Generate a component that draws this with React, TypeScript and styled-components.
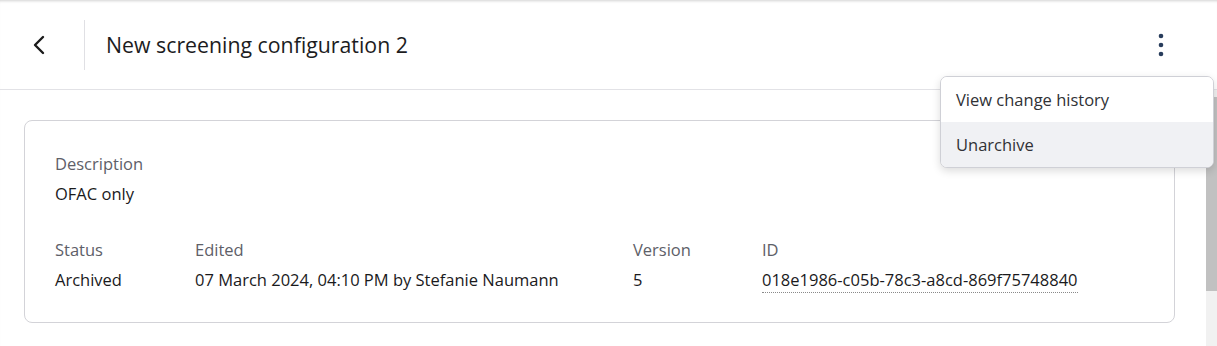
import styled, { createGlobalStyle } from "styled-components";
import { ChevronLeft } from "lucide-react";

const GlobalStyle = createGlobalStyle`
    html, body {
        margin: 0;
        padding: 0;
        background: #ffffff;
        font-family: "Open Sans", "Noto Sans", sans-serif;
        color: #1c1c1e;
        overflow: hidden;
    }
`;

type Field = { label: string; value: string; width: number; link?: boolean };

const fields: Field[] = [
    { label: "Status", value: "Archived", width: 140 },
    { label: "Edited", value: "07 March 2024, 04:10 PM by Stefanie Naumann", width: 438 },
    { label: "Version", value: "5", width: 129 },
    { label: "ID", value: "018e1986-c05b-78c3-a8cd-869f75748840", width: 340, link: true },
];

export default function App() {
    return (
        <Page>
            <GlobalStyle />
            <Header>
                <BackButton aria-label="Back">
                    <ChevronLeft size={32} strokeWidth={1.8} />
                </BackButton>
                <Divider />
                <Title>New screening configuration 2</Title>
                <MenuAnchor>
                    <KebabButton aria-label="More">
                        <svg width="6" height="24" viewBox="0 0 6 24">
                            <circle cx="3" cy="3" r="2.3" fill="#283d5c" />
                            <circle cx="3" cy="12" r="2.3" fill="#283d5c" />
                            <circle cx="3" cy="21" r="2.3" fill="#283d5c" />
                        </svg>
                    </KebabButton>
                    <Dropdown>
                        <DropdownItem>View change history</DropdownItem>
                        <DropdownItem $active>Unarchive</DropdownItem>
                    </Dropdown>
                </MenuAnchor>
            </Header>

            <Body>
                <Content>
                    <Card>
                        <Group>
                            <Label>Description</Label>
                            <Value>OFAC only</Value>
                        </Group>
                        <FieldRow>
                            {fields.map((f) => (
                                <Group key={f.label} $width={f.width}>
                                    <Label>{f.label}</Label>
                                    <Value $link={f.link}>{f.value}</Value>
                                </Group>
                            ))}
                        </FieldRow>
                    </Card>
                </Content>
                <ScrollTrack>
                    <ScrollThumb />
                </ScrollTrack>
            </Body>
        </Page>
    );
}

const Page = styled.div`
    width: 1217px;
    height: 346px;
    display: flex;
    flex-direction: column;
    box-shadow: inset 0 3px 3px -2px rgba(0, 0, 0, 0.18);
`;

const Header = styled.div`
    height: 90px;
    flex-shrink: 0;
    display: flex;
    align-items: center;
    border-bottom: 1px solid #e2e2e6;
    padding: 0 0 0 23px;
    box-sizing: border-box;
`;

const BackButton = styled.div`
    width: 32px;
    height: 32px;
    display: flex;
    align-items: center;
    justify-content: center;
    color: #1a1a1a;
    margin-right: 29px;
`;

const Divider = styled.div`
    width: 1px;
    height: 50px;
    background: #e0e0e4;
`;

const Title = styled.h1`
    margin: 0 0 0 21px;
    font-size: 21.3px;
    font-weight: 400;
    color: #1c1c1e;
    flex: 1;
`;

const MenuAnchor = styled.div`
    position: relative;
    width: 60px;
    height: 40px;
    margin-right: 26px;
    display: flex;
    align-items: center;
    justify-content: center;
`;

const KebabButton = styled.div`
    display: flex;
    align-items: center;
    justify-content: center;
    width: 32px;
    height: 32px;
`;

const Dropdown = styled.div`
    position: absolute;
    top: 51px;
    right: -23px;
    width: 272px;
    background: #ffffff;
    border: 1px solid #cfd0d6;
    border-radius: 7px;
    box-shadow: 0 3px 8px rgba(0, 0, 0, 0.14);
    overflow: hidden;
    z-index: 10;
`;

const DropdownItem = styled.div<{ $active?: boolean }>`
    height: 45px;
    display: flex;
    align-items: center;
    padding: 0 15px;
    font-size: 16.5px;
    color: #303236;
    background: ${({ $active }) => ($active ? "#f0f1f4" : "#ffffff")};
`;

const Body = styled.div`
    flex: 1;
    display: flex;
    min-height: 0;
`;

const Content = styled.div`
    flex: 1;
    padding: 30px 31px 0 24px;
`;

const Card = styled.div`
    border: 1px solid #d3d3d8;
    border-radius: 8px;
    padding: 31px 30px 29px;
    display: flex;
    flex-direction: column;
    gap: 32px;
`;

const FieldRow = styled.div`
    display: flex;
`;

const Group = styled.div<{ $width?: number }>`
    display: flex;
    flex-direction: column;
    gap: 6px;
    width: ${({ $width }) => ($width ? `${$width}px` : "auto")};
`;

const Label = styled.span`
    font-size: 16.5px;
    line-height: 24px;
    color: #5e6068;
`;

const Value = styled.span<{ $link?: boolean }>`
    font-size: 16.5px;
    line-height: 24px;
    color: #1a1a1c;
    align-self: flex-start;
    border-bottom: ${({ $link }) => ($link ? "1px dotted #8a8a8a" : "none")};
`;

const ScrollTrack = styled.div`
    width: 11px;
    background: #f1f1f1;
    padding-top: 7px;
    flex-shrink: 0;
`;

const ScrollThumb = styled.div`
    height: 194px;
    background: #c1c1c1;
`;
